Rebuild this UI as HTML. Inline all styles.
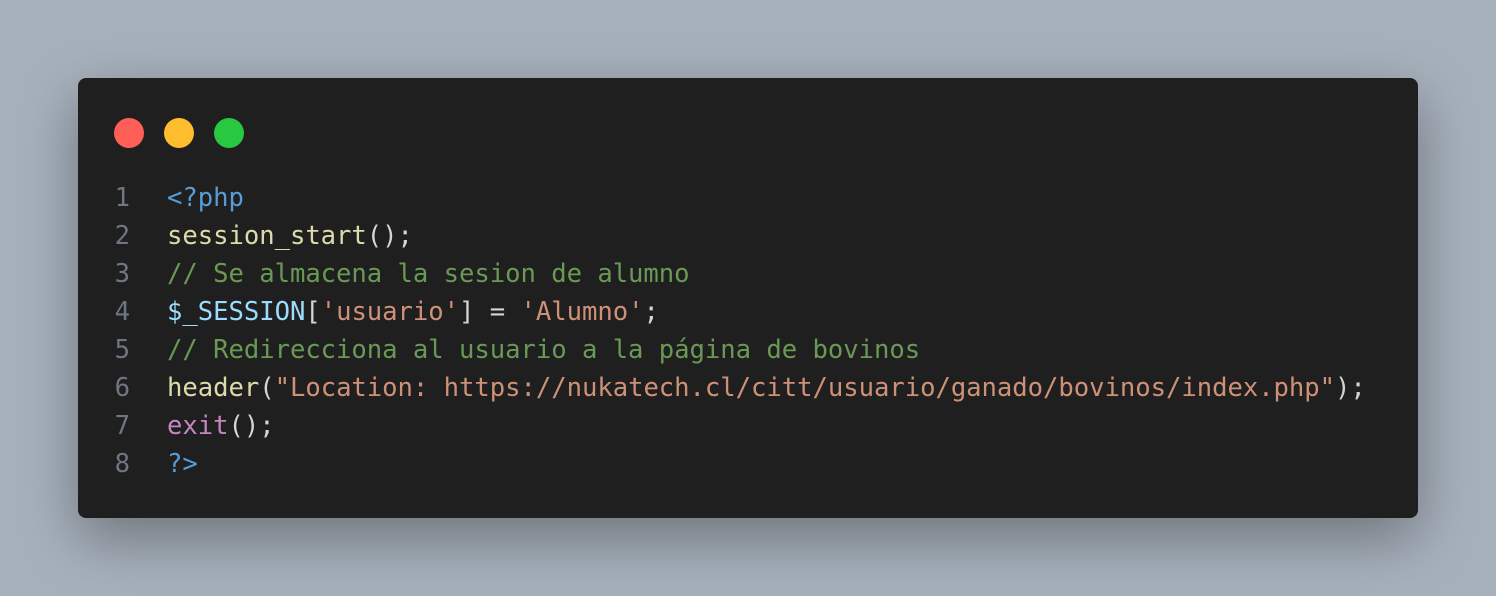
<!DOCTYPE html>
<html><head><style>
html,body{margin:0;padding:0;width:1496px;height:596px;overflow:hidden;background:#a7b1bc;}
.card{position:absolute;left:78px;top:78px;width:1340px;height:440px;background:#1f1f1f;border-radius:8px;box-shadow:0 20px 60px rgba(0,0,0,0.35);}
.dot{position:absolute;top:40px;width:30px;height:30px;border-radius:50%;}
pre{position:absolute;left:0;top:101px;margin:0;font-family:"DejaVu Sans Mono","Liberation Mono",monospace;font-size:25.6px;line-height:38px;color:#d4d4d4;letter-spacing:-0.04px;}
.ln{display:inline-block;width:52px;text-align:right;color:#6e7681;margin-right:37px;}
.b{color:#569cd6}.f{color:#dcdcaa}.c{color:#6a9955}.v{color:#9cdcfe}.s{color:#ce9178}.k{color:#c586c0}
</style></head><body>
<div class="card">
<div class="dot" style="left:36px;background:#ff5f57"></div>
<div class="dot" style="left:86px;background:#febc2e"></div>
<div class="dot" style="left:136px;background:#28c840"></div>
<pre><span class="ln">1</span><span class="b">&lt;?php</span>
<span class="ln">2</span><span class="f">session_start</span>();
<span class="ln">3</span><span class="c">// Se almacena la sesion de alumno</span>
<span class="ln">4</span><span class="v">$_SESSION</span>[<span class="s">'usuario'</span>] = <span class="s">'Alumno'</span>;
<span class="ln">5</span><span class="c">// Redirecciona al usuario a la página de bovinos</span>
<span class="ln">6</span><span class="f">header</span>(<span class="s">"Location: https://nukatech.cl/citt/usuario/ganado/bovinos/index.php"</span>);
<span class="ln">7</span><span class="k">exit</span>();
<span class="ln">8</span><span class="b">?&gt;</span></pre>
</div>
</body></html>
